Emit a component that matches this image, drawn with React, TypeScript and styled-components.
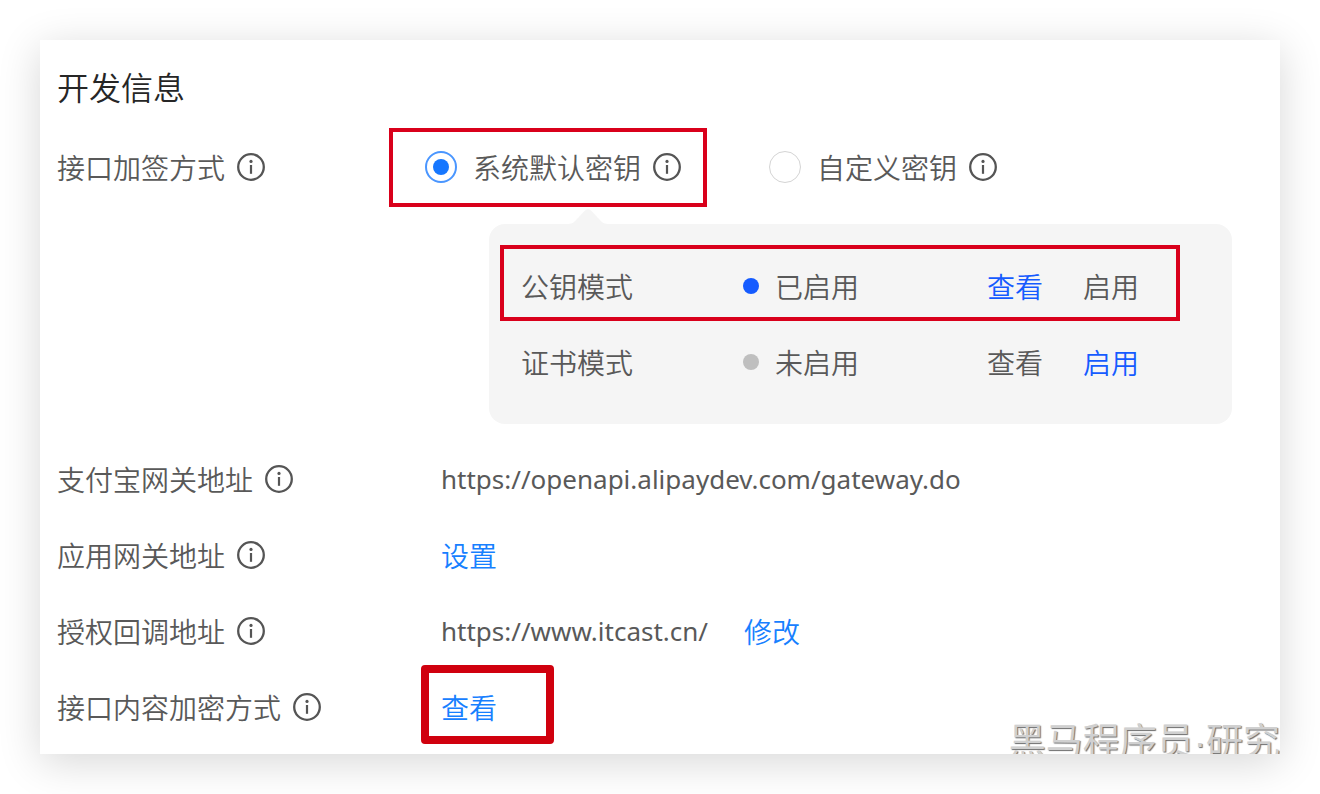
import React, { useState } from "react";
import styled, { createGlobalStyle, css } from "styled-components";

const GlobalStyle = createGlobalStyle`
  *, *::before, *::after { box-sizing: border-box; }
  body {
    margin: 0;
    background: #fff;
    color: #595959;
    font-family: "Noto Sans CJK SC", sans-serif;
    font-size: 28px;
    font-weight: 350;
    line-height: 40px;
  }
`;

const Page = styled.div`
  padding: 40px;
`;

const Card = styled.main`
  position: relative;
  padding: 24px 48px 8px 17px;
  background: #fff;
  box-shadow: 0 8px 40px rgba(0, 0, 0, 0.16);
`;

const Title = styled.h1`
  margin: 0 0 22px;
  color: #262626;
  font-size: 32px;
  font-weight: 350;
  line-height: 44px;
`;

const Row = styled.div`
  display: grid;
  grid-template-columns: 384px 1fr;
  align-items: center;
  min-height: 76px;
  padding-bottom: 2px;
`;

const Label = styled.div`
  display: flex;
  align-items: center;
  gap: 12px;
`;

const Value = styled.div`
  display: flex;
  align-items: center;
  gap: 36px;
`;

const Url = styled.span`
  font-family: "Noto Sans", sans-serif;
  font-size: 26px;
  font-weight: 400;
`;

const highlight = css`
  position: relative;

  &::after {
    content: "";
    position: absolute;
    border: 4px solid #d9001b;
    pointer-events: none;
  }
`;

const Options = styled.div`
  display: flex;
  gap: 88px;
  margin-left: -16px;
`;

const Option = styled.div<{ $marked?: boolean }>`
  display: flex;
  align-items: center;
  gap: 12px;
  ${(p) => p.$marked && highlight}

  &::after {
    inset: -19px -26px -20px -36px;
  }
`;

const OptionLabel = styled.label`
  display: flex;
  align-items: center;
  gap: 16px;
`;

const Radio = styled.input`
  appearance: none;
  display: grid;
  place-items: center;
  width: 32px;
  height: 32px;
  margin: 0;
  border: 1px solid #d4d4d4;
  border-radius: 50%;
  background: #fff;

  &:checked {
    border: 2px solid #4a96ff;
  }

  &:checked::before {
    content: "";
    width: 16px;
    height: 16px;
    border-radius: 50%;
    background: #1677ff;
  }
`;

const Panel = styled.div`
  position: relative;
  margin: 18px 0 18px 432px;
  padding: 24px 32px;
  border-radius: 16px;
  background: #f5f5f5;
`;

const Arrow = styled.svg`
  position: absolute;
  top: -16px;
  left: 79px;
  width: 40px;
  height: 16px;
  fill: #f5f5f5;
`;

const Modes = styled.ul`
  margin: 0;
  padding: 0;
  list-style: none;
`;

const Mode = styled.li<{ $marked?: boolean }>`
  display: grid;
  grid-template-columns: 222px 244px 96px auto;
  align-items: center;
  justify-content: start;
  height: 76px;
  ${(p) => p.$marked && highlight}

  &::after {
    inset: -3px 20px 3px -21px;
  }
`;

const Status = styled.span<{ $on?: boolean }>`
  display: flex;
  align-items: center;
  gap: 16px;

  &::before {
    content: "";
    width: 16px;
    height: 16px;
    border-radius: 50%;
    background: ${(p) => (p.$on ? "#155bff" : "#bfbfbf")};
  }
`;

const Action = styled.button<{ $color?: string }>`
  justify-self: start;
  padding: 0;
  border: 0;
  background: none;
  color: ${(p) => p.$color ?? "#1780ff"};
  font: inherit;
  cursor: pointer;
`;

const ActionFrame = styled.span`
  position: relative;
  display: flex;

  &::after {
    content: "";
    position: absolute;
    inset: -22px -57px -17px -20px;
    border: 8px solid #d0000e;
    border-radius: 4px;
    pointer-events: none;
  }
`;

const WatermarkClip = styled.div`
  position: absolute;
  right: 0;
  bottom: 0;
  height: 40px;
  overflow: hidden;
  opacity: 0.99;
`;

const Watermark = styled.div`
  padding-left: 4px;
  color: #d0d0d0;
  font-family: "Liberation Sans", "Noto Sans CJK SC", sans-serif;
  font-size: 37px;
  font-weight: 400;
  line-height: 58px;
  text-shadow: 1px 1px 1px #6c6c6c;
  white-space: nowrap;
`;

const InfoSvg = styled.svg`
  flex: none;
  width: 28px;
  height: 28px;
`;

function Info() {
  return (
    <InfoSvg viewBox="0 0 28 28" role="img" aria-label="说明">
      <circle cx="14" cy="14" r="12.8" fill="none" stroke="#555" strokeWidth="2.3" />
      <circle cx="14" cy="8.4" r="1.6" fill="#555" />
      <path d="M14 12v8.8" stroke="#555" strokeWidth="2.2" />
    </InfoSvg>
  );
}

const BLUE = "#155bff";
const GREY = "#595959";

const modes = [
  { name: "公钥模式", on: true, status: "已启用" },
  { name: "证书模式", on: false, status: "未启用" },
];

export default function App() {
  const [key, setKey] = useState("system");
  return (
    <Page>
      <GlobalStyle />
      <Card>
        <Title>开发信息</Title>
        <Row>
          <Label>接口加签方式<Info /></Label>
          <Options role="radiogroup" aria-label="接口加签方式">
            <Option $marked>
              <OptionLabel>
                <Radio type="radio" name="key" checked={key === "system"} onChange={() => setKey("system")} />
                系统默认密钥
              </OptionLabel>
              <Info />
            </Option>
            <Option>
              <OptionLabel>
                <Radio type="radio" name="key" checked={key === "custom"} onChange={() => setKey("custom")} />
                自定义密钥
              </OptionLabel>
              <Info />
            </Option>
          </Options>
        </Row>
        <Panel>
          <Arrow viewBox="0 0 40 16" aria-hidden="true">
            <path d="M0 16C5 16 7 13 10 10L17 2.6Q20 0 23 2.6L30 10C33 13 35 16 40 16Z" />
          </Arrow>
          <Modes>
            {modes.map((m) => (
              <Mode key={m.name} $marked={m.on}>
                <span>{m.name}</span>
                <Status $on={m.on}>{m.status}</Status>
                <Action type="button" $color={m.on ? BLUE : GREY}>查看</Action>
                <Action type="button" $color={m.on ? GREY : BLUE}>启用</Action>
              </Mode>
            ))}
          </Modes>
        </Panel>
        <Row>
          <Label>支付宝网关地址<Info /></Label>
          <Value><Url>https://openapi.alipaydev.com/gateway.do</Url></Value>
        </Row>
        <Row>
          <Label>应用网关地址<Info /></Label>
          <Value><Action type="button">设置</Action></Value>
        </Row>
        <Row>
          <Label>授权回调地址<Info /></Label>
          <Value>
            <Url>https://www.itcast.cn/</Url>
            <Action type="button">修改</Action>
          </Value>
        </Row>
        <Row>
          <Label>接口内容加密方式<Info /></Label>
          <Value>
            <ActionFrame><Action type="button">查看</Action></ActionFrame>
          </Value>
        </Row>
        <WatermarkClip>
          <Watermark>黑马程序员·研究</Watermark>
        </WatermarkClip>
      </Card>
    </Page>
  );
}
